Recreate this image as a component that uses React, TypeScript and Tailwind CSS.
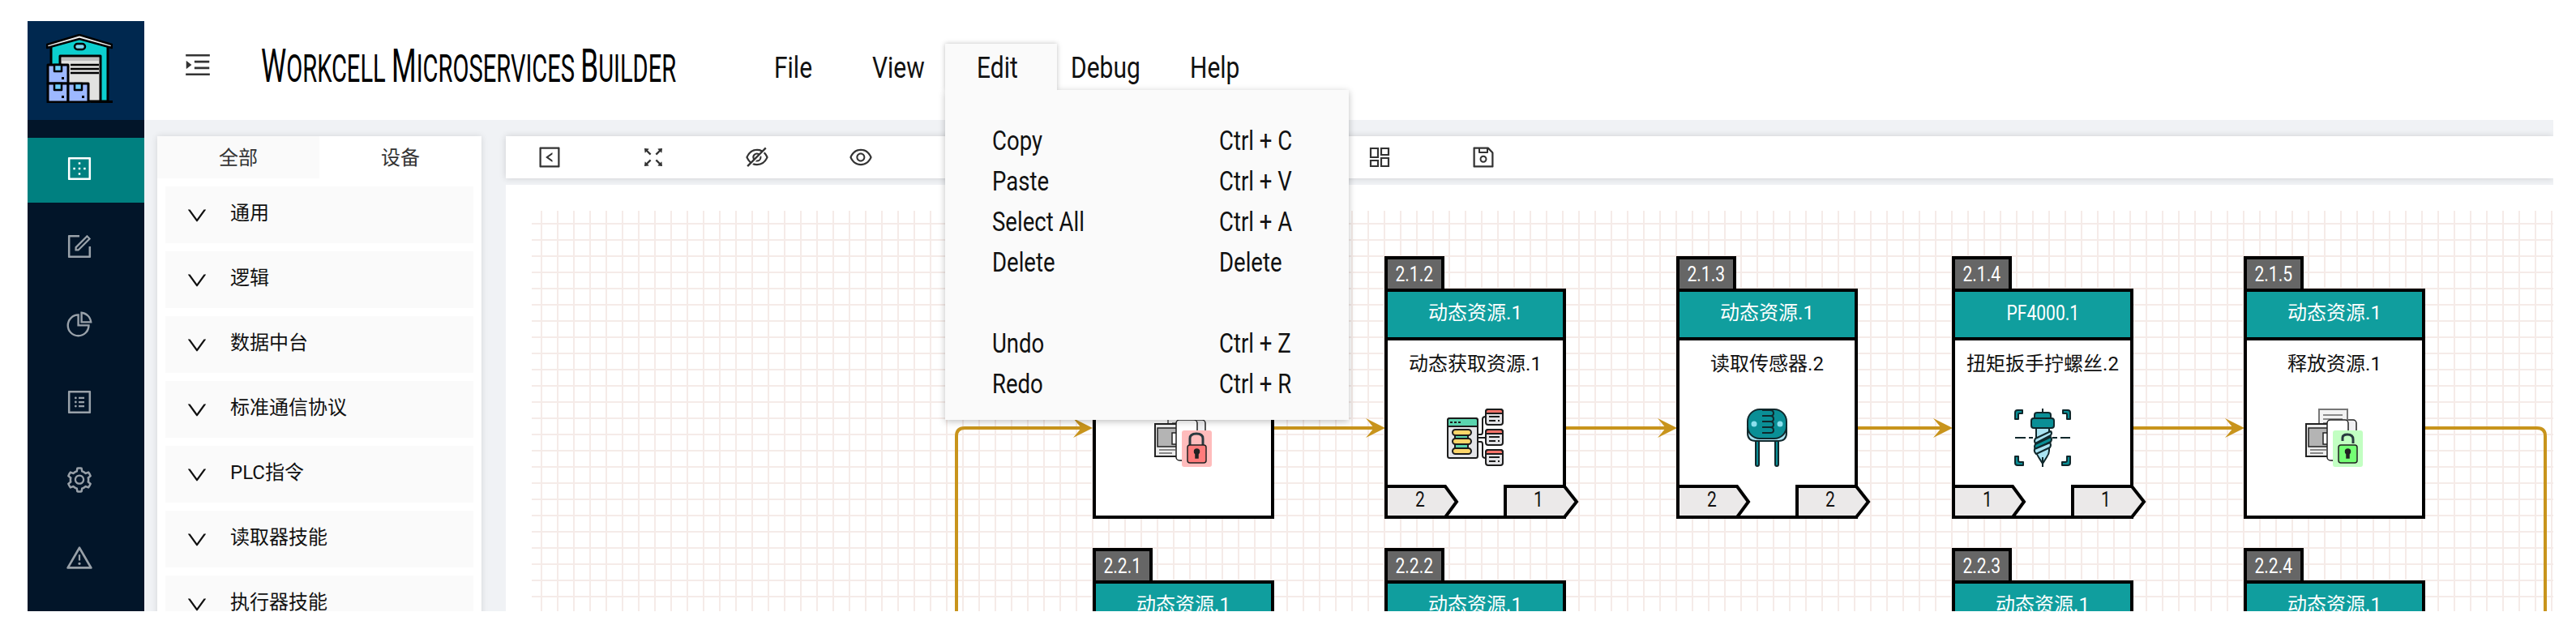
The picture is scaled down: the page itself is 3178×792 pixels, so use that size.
import React from "react";
import {
  AiOutlineBorderOuter,
  AiOutlineForm,
  AiOutlinePieChart,
  AiOutlineProfile,
  AiOutlineSetting,
  AiOutlineWarning,
  AiOutlineMenuUnfold,
  AiOutlineDown,
  AiOutlineLeftSquare,
  AiOutlineFullscreen,
  AiOutlineEyeInvisible,
  AiOutlineEye,
  AiOutlineSave,
} from "react-icons/ai";

const CJK = "font-['Roboto','Noto_Sans_CJK_SC',sans-serif]";

// narrow latin text, the app uses a condensed face that is not installed
const Narrow = ({ children, center }: { children: React.ReactNode; center?: boolean }) => (
  <span className={`inline-block scale-x-[0.81] ${center ? "origin-center" : "origin-left"}`}>{children}</span>
);

const Logo = () => (
  <svg width="82" height="85" viewBox="0 0 82 85" strokeLinejoin="round">
    <path d="M6 14 L41 4 L76 14 V83 H6 Z" fill="#0ccfcf" stroke="#000" strokeWidth="3" />
    <path d="M1 13 L41 1 L81 13 V17 L41 6 L1 17 Z" fill="#ececec" stroke="#000" strokeWidth="2.5" />
    <rect x="35" y="12" width="13" height="7" rx="3.5" fill="#7fd8f0" stroke="#000" strokeWidth="2.5" />
    <rect x="17" y="27" width="50" height="56" fill="#e2e2e0" stroke="#000" strokeWidth="3" />
    <rect x="19" y="29" width="46" height="4" fill="#bdbdbd" />
    <path d="M30 38 H65 M30 43 H65 M30 48 H65" stroke="#000" strokeWidth="2.5" />
    <path d="M55 83.5 H82" stroke="#000" strokeWidth="3" />
    {[
      [2, 38],
      [2, 61],
      [27, 61],
    ].map(([x, y]) => (
      <g key={`${x}-${y}`}>
        <rect x={x} y={y} width="25" height="23" fill="#9db8ff" stroke="#000" strokeWidth="3" />
        <rect x={x + 8} y={y} width="9" height="8" fill="#6fd0ff" stroke="#000" strokeWidth="2.5" />
        <rect x={x + 17} y={y + 15} width="3" height="3" fill="#000" />
      </g>
    ))}
  </svg>
);

// toolbar icon hidden in the list of react-icons, drawn by hand
const TilesIcon = () => (
  <svg width="32" height="32" viewBox="0 0 32 32" fill="none" stroke="#333" strokeWidth="2.2" className="shrink-0">
    <path d="M5 5 H14 V16 H5 Z M18 5 H27 V13 H18 Z M5 20 H14 V27 H5 Z M18 17 H27 V27 H18 Z" />
  </svg>
);

const DataIcon = () => (
  <svg width="72" height="72" viewBox="0 0 72 72" stroke="#1c1c1c" strokeWidth="2">
    <path d="M39 32 H43 Q45 32 45 29 V13 Q45 10 49 10 M39 36 H49 M39 41 H43 Q45 41 45 44 V58 Q45 61 49 61" fill="none" />
    <rect x="2" y="12" width="37" height="49" rx="2.5" fill="#e4e5e8" />
    <path d="M2 22 V14.5 Q2 12 4.5 12 H36.5 Q39 12 39 14.5 V22 Z" fill="#5ad4ae" />
    <path d="M5 17 H8 M10 17 H13 M15 17 H18" />
    <rect x="11" y="30" width="16" height="20" fill="#5ad4ae" />
    {[26, 37, 49].map((y) => (
      <rect key={y} x="8" y={y} width="23" height="7" rx="3.5" fill="#fdd66a" />
    ))}
    {[1, 26, 51].map((y) => (
      <g key={y}>
        <rect x="49" y={y} width="21" height="19" rx="3" fill="#e3e3e6" />
        <path d={`M49 ${y + 5} V${y + 3} Q49 ${y} 52 ${y} H67 Q70 ${y} 70 ${y + 3} V${y + 5} Z`} fill="#f8736a" />
        <path d={`M53 ${y + 9} H66 M53 ${y + 14} H61 M64 ${y + 14} H66`} />
      </g>
    ))}
  </svg>
);

const SensorIcon = () => (
  <svg width="72" height="72" viewBox="0 0 72 72" stroke="#10282c" strokeWidth="2">
    <path d="M22 36 V69 Q22 71 24 71 Q26 71 26 69 V36 Z M46 36 V69 Q46 71 48 71 Q50 71 50 69 V36 Z" fill="#0a8f96" />
    <path d="M12 24 V30 Q12 40 22 40 H50 Q60 40 60 30 V24 Z" fill="#a9e3f2" />
    <rect x="12" y="1" width="48" height="36" rx="15" fill="#0a8f96" />
    <path d="M30 2 H40 Q44 2 44 6 Q44 9 40 9 H30 M30 9 H40 Q44 9 44 13 Q44 16 40 16 H30 M30 16 H40 Q44 16 44 20 Q44 23 40 23 H30 M30 23 H40 Q44 23 44 27 Q44 30 40 30 H30" fill="none" />
    <circle cx="20" cy="19" r="3.5" fill="#8ce0ee" stroke="none" />
    <circle cx="52" cy="19" r="3.5" fill="#8ce0ee" stroke="none" />
  </svg>
);

const ScrewIcon = () => (
  <svg width="72" height="72" viewBox="0 0 72 72" stroke="#10282c" strokeWidth="2" strokeLinejoin="round">
    <path d="M2 13 V5 Q2 2 5 2 H11 V6 H7 Q6 6 6 8 V13 Z" fill="#0a8f96" />
    <path d="M70 13 V5 Q70 2 67 2 H61 V6 H65 Q66 6 66 8 V13 Z" fill="#0a8f96" />
    <path d="M2 59 V67 Q2 70 5 70 H12 V66 H8 Q6 66 6 64 V59 Z" fill="#0a8f96" />
    <path d="M70 59 V67 Q70 70 67 70 H60 V66 H64 Q66 66 66 64 V59 Z" fill="#0a8f96" />
    <path d="M2 36 H15 M19 36 H24 M48 36 H54 M58 36 H70" fill="none" />
    <path d="M36 0 V6" fill="none" />
    <path d="M28 24 H44 V52 Q44 56 41 60 L36 68 L31 60 Q28 56 28 52 Z" fill="#a9e3f2" />
    <path d="M36 60 V72" fill="none" />
    <rect x="26" y="5" width="20" height="12" rx="3" fill="#0a8f96" />
    <rect x="22" y="12" width="28" height="12" rx="3" fill="#0a8f96" />
    <path d="M27 37 L46 28 Q48 30 46 33 L27 43 Q25 40 27 37 Z" fill="#a9e3f2" />
    <path d="M27 44 L46 35 Q48 38 46 41 L27 50 Q25 47 27 44 Z" fill="#0a8f96" />
    <path d="M26 50 L45 42 Q47 45 45 48 L28 56 Q25 53 26 50 Z" fill="#a9e3f2" />
  </svg>
);

const DocLockIcon = ({ open }: { open?: boolean }) => (
  <svg width="72" height="72" viewBox="0 0 72 72" stroke="#222" strokeWidth="1.5">
    <rect x="30" y="14" width="33" height="50" rx="4" fill="#f0f0f2" />
    <rect x="17" y="1" width="35" height="42" fill="#f2f2f2" stroke="#777" strokeWidth="2" />
    <path d="M22 8 H46 M22 13 H46 M22 18 H46 M22 23 H46" strokeWidth="1" />
    <rect x="1" y="19" width="30" height="40" fill="#ededed" strokeWidth="2" />
    <rect x="4" y="24" width="24" height="23" fill="#b4b4b4" />
    <path d="M6 51 H26 M6 55 H22" strokeWidth="1" />
    <rect x="22" y="30" width="6" height="14" fill="#fff" strokeWidth="1.5" />
    <rect x="27" y="14" width="26" height="50" rx="4" fill="#fff" />
    <rect x="34" y="27" width="37" height="45" rx="3" fill={open ? "#c2ffc2" : "#ffbcbc"} stroke="none" />
    <path
      d={open ? "M46 40 V36 Q46 32 52 32 Q59 32 59 38 V43" : "M44 46 V37 Q44 31 52 31 Q60 31 60 37 V46"}
      fill="none"
      stroke="#2a3a40"
      strokeWidth="3"
    />
    <rect x="41" y="45" width="23" height="22" rx="3" fill={open ? "#74ff74" : "#ff7b7b"} />
    <circle cx="52.5" cy="53" r="3" fill="#222" />
    <rect x="51" y="54" width="3" height="7" fill="#222" />
  </svg>
);

const Port = ({ label, side }: { label: string; side: "left" | "right" }) => (
  <div
    className={`absolute top-[300px] -translate-x-1/2 -translate-y-1/2 text-[26px] leading-none text-[#111] ${
      side === "left" ? "left-[44px]" : "left-[190px]"
    }`}
  >
    <Narrow center>{label}</Narrow>
  </div>
);

type NodeProps = {
  x: number;
  y: number;
  tag: string;
  title: string;
  name: string;
  icon: React.ReactNode;
  ports?: [string, string];
};

const FlowNode = ({ x, y, tag, title, name, icon, ports }: NodeProps) => (
  <div className="absolute flex flex-col" style={{ left: x, top: y }}>
    <div className="-mb-1 flex h-11 w-[74px] items-center justify-center border-4 border-black bg-[#666666] text-[26px] text-white">
      <Narrow center>{tag}</Narrow>
    </div>
    <div className="flex h-[284px] w-[224px] flex-col items-center border-4 border-black bg-white">
      <div className="flex h-[60px] w-full items-center justify-center border-b-4 border-black bg-[#109e9e] pb-1 text-[24px] text-white">
        {title.startsWith("PF") ? <span className="text-[26px]"><Narrow center>{title}</Narrow></span> : title}
      </div>
      <div className="mt-[11px] text-[24px] leading-9 whitespace-nowrap text-[#111]">{name}</div>
      <div className="mt-[37px]">{icon}</div>
    </div>
    {ports && (
      <>
        <svg className="absolute top-0 left-0 overflow-visible" width="240" height="328">
          <polygon points="2,284 75,284 89,303 75,322 2,322" fill="#ebe9e9" stroke="#000" strokeWidth="4" />
          <polygon points="149,284 222,284 237,303 222,322 149,322" fill="#ebe9e9" stroke="#000" strokeWidth="4" />
        </svg>
        <Port label={ports[0]} side="left" />
        <Port label={ports[1]} side="right" />
      </>
    )}
  </div>
);

const Arrow = ({ x, y }: { x: number; y: number }) => (
  <polygon points={`${x},${y} ${x - 24},${y - 12} ${x - 14},${y} ${x - 24},${y + 12}`} fill="#c8941c" />
);

const sideIcons = [AiOutlineBorderOuter, AiOutlineForm, AiOutlinePieChart, AiOutlineProfile, AiOutlineSetting, AiOutlineWarning];
const groups = ["通用", "逻辑", "数据中台", "标准通信协议", "PLC指令", "读取器技能", "执行器技能"];
const toolIcons = [
  AiOutlineLeftSquare,
  AiOutlineFullscreen,
  AiOutlineEyeInvisible,
  AiOutlineEye,
  TilesIcon,
  TilesIcon,
  TilesIcon,
  TilesIcon,
  TilesIcon,
  AiOutlineSave,
];
const menuRows = [
  ["Copy", "Ctrl + C"],
  ["Paste", "Ctrl + V"],
  ["Select All", "Ctrl + A"],
  ["Delete", "Delete"],
  ["", ""],
  ["Undo", "Ctrl + Z"],
  ["Redo", "Ctrl + R"],
];

const App = () => {
  return (
    <div className={`h-[792px] w-[3178px] overflow-hidden bg-white pt-[26px] pr-[28px] pl-[34px] ${CJK}`}>
      <div className="flex h-[728px] flex-col">
        {/* header */}
        <header className="relative z-20 flex h-[122px] shrink-0 bg-white">
          <div className="flex h-full w-[144px] shrink-0 items-start bg-[#00284f] pt-[16px] pl-[23px]">
            <Logo />
          </div>
          <div className="flex h-[108px] items-center pl-[47px] text-black">
            <AiOutlineMenuUnfold size={38} color="#333" />
            <div className="ml-[59px] w-[633px] pt-[2px] font-normal whitespace-nowrap text-black uppercase">
              <span className="inline-block origin-left scale-x-[0.606] leading-none">
                <span className="text-[58px]">W</span>
                <span className="text-[48px]">orkcell </span>
                <span className="text-[58px]">M</span>
                <span className="text-[48px]">icroservices </span>
                <span className="text-[58px]">B</span>
                <span className="text-[48px]">uilder</span>
              </span>
            </div>
            <nav className="mt-[5px] flex h-[57px] items-center text-[37px] text-[#111]">
              <div className="w-[121px] pt-[2px]">
                <Narrow>File</Narrow>
              </div>
              <div className="w-[90px] pt-[2px]">
                <Narrow>View</Narrow>
              </div>
              <div className="relative flex h-full w-[138px] items-center bg-[#fafafa] pt-[2px] pl-[39px] shadow-[0_0_6px_rgba(0,0,0,0.25)]">
                <span className="relative z-10">
                  <Narrow>Edit</Narrow>
                </span>
                <div className="absolute top-full left-0 flex h-[407px] w-[498px] flex-col bg-[#fafafa] pt-[37px] pl-[58px] text-[34px] shadow-[0_2px_8px_rgba(0,0,0,0.25)]">
                  {menuRows.map(([label, keys], i) => (
                    <div key={i} className="flex h-[50px] shrink-0 items-center">
                      <div className="w-[280px]">
                        <Narrow>{label}</Narrow>
                      </div>
                      <Narrow>{keys}</Narrow>
                    </div>
                  ))}
                </div>
                <div className="absolute right-0 bottom-0 left-0 z-[5] h-2 bg-[#fafafa]" />
              </div>
              <div className="w-[164px] pt-[2px] pl-[17px]">
                <Narrow>Debug</Narrow>
              </div>
              <div className="pt-[2px]">
                <Narrow>Help</Narrow>
              </div>
            </nav>
          </div>
        </header>

        <div className="flex min-h-0 flex-1">
          {/* sidebar */}
          <aside className="flex w-[144px] shrink-0 flex-col gap-4 bg-[#021529] pt-[22px]">
            {sideIcons.map((Icon, i) => (
              <div key={i} className={`flex h-20 shrink-0 items-center pb-1 pl-[46px] ${i === 0 ? "bg-[#008080]" : ""}`}>
                <Icon size={36} color={i === 0 ? "#fff" : "rgba(255,255,255,0.6)"} />
              </div>
            ))}
          </aside>

          <main className="flex min-w-0 flex-1 gap-[30px] overflow-hidden bg-[#f0f2f5] pt-5 pl-4">
            {/* left panel */}
            <div className="h-[700px] w-[400px] shrink-0 bg-white shadow-[0_0_8px_rgba(0,0,0,0.12)]">
              <div className="flex h-[52px] text-[24px] text-[#333]">
                <div className="flex w-[200px] items-center justify-center bg-[#fafafa] pt-[2px]">全部</div>
                <div className="flex w-[200px] items-center justify-center pt-[2px]">设备</div>
              </div>
              <div className="flex flex-col gap-[10px] px-[10px] pt-[10px]">
                {groups.map((g) => (
                  <div key={g} className="flex h-[70px] shrink-0 items-start bg-[#fafafa] pt-[15px] pl-[24px] text-[24px] text-[#111]">
                    <AiOutlineDown size={30} className="mt-[6px] shrink-0" color="#111" />
                    <span className="ml-[26px] leading-9">{g}</span>
                  </div>
                ))}
              </div>
            </div>

            {/* workspace */}
            <div className="flex min-w-0 flex-1 flex-col gap-2">
              <div className="flex h-[52px] shrink-0 items-center gap-[96px] bg-white pl-[38px] shadow-[0_0_8px_rgba(0,0,0,0.15)]">
                {toolIcons.map((Icon, i) => (
                  <Icon key={i} size={32} color="#333" className="shrink-0" />
                ))}
              </div>
              <div className="relative flex-1 overflow-hidden bg-white">
                <div className="absolute top-8 right-0 bottom-0 left-8 bg-[linear-gradient(to_right,transparent_11px,#f5ebe8_11px,#f5ebe8_13px,transparent_13px),linear-gradient(to_bottom,transparent_15px,#f5ebe8_15px,#f5ebe8_17px,transparent_17px)] bg-size-[20px_20px]" />
                <svg className="absolute top-0 left-0" width="2526" height="526" fill="none">
                  <path d="M556 526 V310 Q556 300 566 300 H720" stroke="#c8941c" strokeWidth="4" />
                  <path d="M948 300 H1080 M1308 300 H1440 M1668 300 H1780 M2008 300 H2140" stroke="#c8941c" strokeWidth="4" />
                  <path d="M2368 300 H2506 Q2516 300 2516 310 V526" stroke="#c8941c" strokeWidth="4" />
                  <Arrow x={724} y={300} />
                  <Arrow x={1085} y={300} />
                  <Arrow x={1445} y={300} />
                  <Arrow x={1785} y={300} />
                  <Arrow x={2145} y={300} />
                </svg>
                <FlowNode x={724} y={88} tag="2.1.1" title="动态资源.1" name="获取资源.1" icon={<DocLockIcon />} />
                <FlowNode x={1084} y={88} tag="2.1.2" title="动态资源.1" name="动态获取资源.1" icon={<DataIcon />} ports={["2", "1"]} />
                <FlowNode x={1444} y={88} tag="2.1.3" title="动态资源.1" name="读取传感器.2" icon={<SensorIcon />} ports={["2", "2"]} />
                <FlowNode x={1784} y={88} tag="2.1.4" title="PF4000.1" name="扭矩扳手拧螺丝.2" icon={<ScrewIcon />} ports={["1", "1"]} />
                <FlowNode x={2144} y={88} tag="2.1.5" title="动态资源.1" name="释放资源.1" icon={<DocLockIcon open />} />
                <FlowNode x={724} y={448} tag="2.2.1" title="动态资源.1" name="" icon={null} />
                <FlowNode x={1084} y={448} tag="2.2.2" title="动态资源.1" name="" icon={null} />
                <FlowNode x={1784} y={448} tag="2.2.3" title="动态资源.1" name="" icon={null} />
                <FlowNode x={2144} y={448} tag="2.2.4" title="动态资源.1" name="" icon={null} />
              </div>
            </div>
          </main>
        </div>
      </div>
    </div>
  );
};

export default App;
